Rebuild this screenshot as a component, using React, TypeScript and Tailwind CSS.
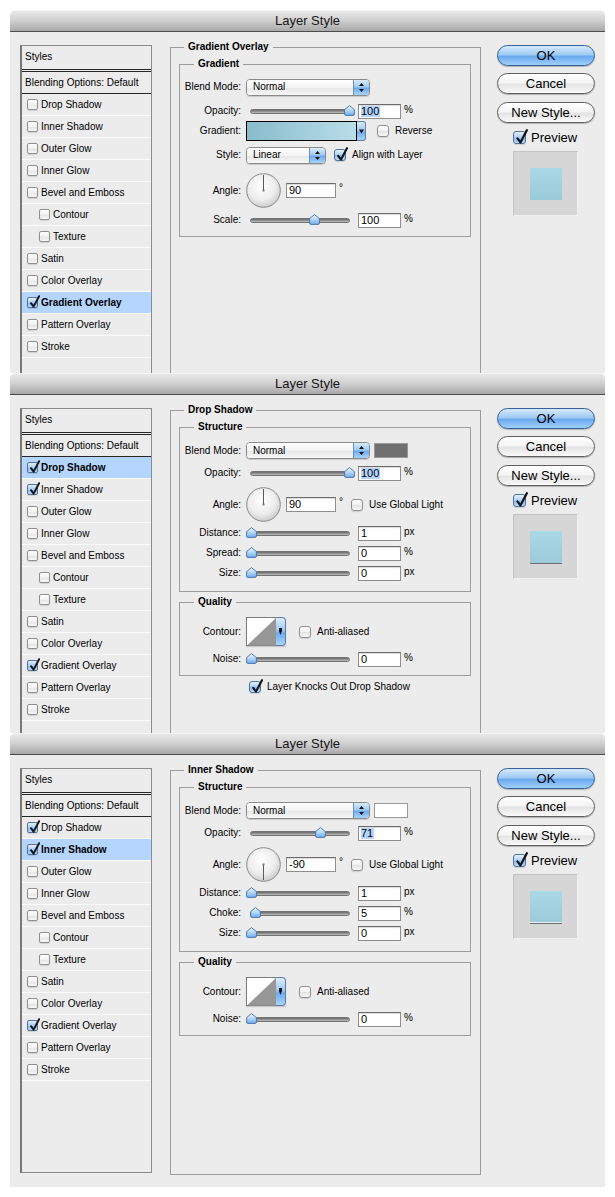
import React from "react";

const BLUE =
  "bg-[linear-gradient(to_bottom,#dcecfc_0%,#9fcaf4_45%,#6eaaf0_55%,#a8d4fb_100%)]";

type CBProps = { checked?: boolean; size?: 11 | 12 | 13; className?: string };

function CheckBox({ checked, size = 12, className }: CBProps) {
  const box =
    size === 11
      ? "w-[11px] h-[11px] rounded-[2px]"
      : size === 13
      ? "w-[13px] h-[13px] rounded-[3px]"
      : "w-[12px] h-[12px] rounded-[3px]";
  const skin = checked
    ? "border border-[#52729c] bg-[linear-gradient(to_bottom,#e6f1fc_0%,#a9cdf3_50%,#86b8ee_51%,#b8dafd_100%)]"
    : "border border-[#8f8f8f] bg-[linear-gradient(to_bottom,#ffffff_0%,#f0f0f0_50%,#e3e3e3_51%,#f7f7f7_100%)]";
  return (
    <span
      className={`relative inline-block shrink-0 ${box} ${skin} shadow-[0_1px_1px_rgba(0,0,0,0.12)] ${className ?? ""}`}
    >
      {checked && (
        <svg
          className="absolute left-[1px] top-[-3px]"
          width={size}
          height={size + 3}
          viewBox="0 0 12 15"
        >
          <path
            d="M2.2 8.8 L5 12.6 L11 1.2"
            fill="none"
            stroke="#141414"
            strokeWidth="2.1"
            strokeLinecap="round"
            strokeLinejoin="round"
          />
        </svg>
      )}
    </span>
  );
}

type Item = { name: string; indent?: boolean };
const ITEMS: Item[] = [
  { name: "Drop Shadow" },
  { name: "Inner Shadow" },
  { name: "Outer Glow" },
  { name: "Inner Glow" },
  { name: "Bevel and Emboss" },
  { name: "Contour", indent: true },
  { name: "Texture", indent: true },
  { name: "Satin" },
  { name: "Color Overlay" },
  { name: "Gradient Overlay" },
  { name: "Pattern Overlay" },
  { name: "Stroke" },
];

function StylesList({ selected, checked }: { selected: string; checked: string[] }) {
  return (
    <div className="mt-[5px] w-[132px] h-[405px] shrink-0 border border-[#8b8b8b] border-l-2 border-l-[#777777] bg-[#ececec] leading-none">
      <div className="h-[26px] flex items-center pl-[3px] pb-[1px] border-b-[3px] border-double border-b-[#262626]">
        Styles
      </div>
      <div className="h-[22px] flex items-center pl-[3px] border-b border-b-[#262626]">
        Blending Options: Default
      </div>
      {ITEMS.map((it) => {
        const sel = it.name === selected;
        return (
          <div
            key={it.name}
            className={`h-[22px] flex items-center border-b border-b-[#fafafa] ${
              it.indent ? "pl-[17px]" : "pl-[5px]"
            } ${sel ? "bg-[#b4d5fd] font-bold" : ""}`}
          >
            <CheckBox size={11} checked={checked.includes(it.name)} />
            <span className="ml-[3px]">{it.name}</span>
          </div>
        );
      })}
    </div>
  );
}

function Outer({ title, children }: { title: string; children?: React.ReactNode }) {
  return (
    <fieldset className="ml-[18px] w-[311px] h-[412px] shrink-0 min-w-0 border border-[#9c9c9c]">
      <legend className="ml-[13px] px-[4px] font-bold leading-[14px]">{title}</legend>
      {children}
    </fieldset>
  );
}

function Group({
  title,
  className,
  children,
}: {
  title: string;
  className?: string;
  children?: React.ReactNode;
}) {
  return (
    <fieldset className={`ml-[8px] w-[292px] min-w-0 border border-[#9c9c9c] ${className ?? ""}`}>
      <legend className="ml-[14px] px-[4px] font-bold leading-[14px]">{title}</legend>
      {children}
    </fieldset>
  );
}

function Row({
  label,
  cls,
  children,
}: {
  label: string;
  cls: string;
  children?: React.ReactNode;
}) {
  return (
    <div className={`flex items-center ${cls}`}>
      <div className="w-[61px] shrink-0 text-right leading-none">{label}</div>
      <div className="ml-[5px] flex items-center">{children}</div>
    </div>
  );
}

function Select({ w, text }: { w: string; text: string }) {
  return (
    <div
      className={`${w} h-[17px] shrink-0 flex rounded-[4px] border border-[#8a8a8a] overflow-hidden shadow-[0_1px_1px_rgba(0,0,0,0.15)]`}
    >
      <div className="flex-1 flex items-center pl-[6px] leading-none bg-[linear-gradient(to_bottom,#ffffff_0%,#f3f3f3_50%,#e6e6e6_51%,#f7f7f7_100%)]">
        {text}
      </div>
      <div className={`w-[16px] border-l border-l-[#6f8fb8] ${BLUE} flex items-center justify-center`}>
        <svg width="7" height="11" viewBox="0 0 7 11">
          <path d="M3.5 1 L6 4 H1 Z M3.5 10 L6 7 H1 Z" fill="#111" />
        </svg>
      </div>
    </div>
  );
}

function Slider({ v }: { v: number }) {
  return (
    <div className="relative w-[104px] h-[16px] shrink-0 flex items-center">
      <div className="ml-[4px] w-[100px] h-[5px] rounded-full border border-[#737373] bg-[linear-gradient(to_bottom,#6a6a6a,#999999_60%,#c2c2c2)]" />
      <svg
        className="absolute top-[2px]"
        style={{ left: -0.5 + v * 98.5 }}
        width="11"
        height="11"
        viewBox="0 0 11 11"
      >
        <defs>
          <linearGradient id="thumbg" x1="0" y1="0" x2="0" y2="1">
            <stop offset="0" stopColor="#eef6ff" />
            <stop offset="0.5" stopColor="#b4d6f8" />
            <stop offset="1" stopColor="#72abe9" />
          </linearGradient>
        </defs>
        <path
          d="M5.5 0.6 L10.4 4.6 V9 Q10.4 10.4 9 10.4 H2 Q0.6 10.4 0.6 9 V4.6 Z"
          fill="url(#thumbg)"
          stroke="#3f6fa6"
          strokeWidth="0.9"
        />
      </svg>
    </div>
  );
}

function Num({
  value,
  sel,
  cls,
}: {
  value: string;
  sel?: boolean;
  cls: string;
}) {
  return (
    <div
      className={`${cls} h-[15px] shrink-0 bg-white border border-[#8d8d8d] border-t-[#6c6c6c] shadow-[inset_0_1px_1px_rgba(0,0,0,0.15)] flex items-center pl-[2px] text-[11px] leading-none`}
    >
      {sel ? <span className="bg-[#b5d5ff] pr-[1px]">{value}</span> : value}
    </div>
  );
}

function Unit({ children }: { children: React.ReactNode }) {
  return <span className="ml-[3px] mb-[2px] leading-none">{children}</span>;
}

function SliderRow({
  label,
  cls,
  v,
  value,
  unit,
  sel,
}: {
  label: string;
  cls: string;
  v: number;
  value: string;
  unit: string;
  sel?: boolean;
}) {
  return (
    <Row label={label} cls={cls}>
      <Slider v={v} />
      <Num value={value} sel={sel} cls="ml-[8px] w-[43px]" />
      <Unit>{unit}</Unit>
    </Row>
  );
}

function Dial({ down }: { down?: boolean }) {
  return (
    <svg width="35" height="35" viewBox="0 0 35 35" className="shrink-0 block">
      <defs>
        <radialGradient id="dialg" cx="0.45" cy="0.38" r="0.62">
          <stop offset="0" stopColor="#ffffff" />
          <stop offset="0.65" stopColor="#ededed" />
          <stop offset="1" stopColor="#cdcdcd" />
        </radialGradient>
      </defs>
      <circle cx="17.5" cy="17.5" r="16.8" fill="url(#dialg)" stroke="#8a8a8a" strokeWidth="1" />
      <line x1="17.5" y1="17.5" x2="17.5" y2={down ? 33 : 2} stroke="#5a5a5a" strokeWidth="1" />
      <rect x="16.5" y="16.5" width="2" height="2" fill="#777777" />
    </svg>
  );
}

function AngleRow({ cls, value, down, globalLight }: { cls: string; value: string; down?: boolean; globalLight?: boolean }) {
  return (
    <Row label="Angle:" cls={cls}>
      <Dial down={down} />
      <Num value={value} cls="ml-[5px] w-[50px]" />
      <span className="ml-[3px] mb-[5px] leading-none">°</span>
      {globalLight && (
        <>
          <CheckBox className="ml-[8px]" />
          <span className="ml-[6px] leading-none">Use Global Light</span>
        </>
      )}
    </Row>
  );
}

function Contour() {
  return (
    <div className="flex h-[29px] shrink-0 shadow-[0_1px_1px_rgba(0,0,0,0.15)]">
      <svg width="30" height="29" viewBox="0 0 30 29" className="block">
        <rect x="0.5" y="0.5" width="29.5" height="28" fill="#ffffff" stroke="#7d7d7d" />
        <path d="M1 28.5 L30 1 L30 28.5 Z" fill="#979797" />
      </svg>
      <div
        className={`w-[10px] h-[29px] rounded-r-[4px] border border-l-0 border-[#5d7fab] ${BLUE} flex items-center justify-center`}
      >
        <svg width="5" height="8" viewBox="0 0 5 8">
          <path d="M1 0 H4 V3 L2.5 7 L1 3 Z" fill="#111" />
        </svg>
      </div>
    </div>
  );
}

function Quality() {
  return (
    <Group title="Quality" className="mt-[3px]">
      <div className="pb-[8px]">
        <Row label="Contour:" cls="mt-[8px] h-[29px]">
          <Contour />
          <CheckBox className="ml-[13px]" />
          <span className="ml-[6px] leading-none">Anti-aliased</span>
        </Row>
        <SliderRow label="Noise:" cls="mt-[5px] h-[16px]" v={0} value="0" unit="%" />
      </div>
    </Group>
  );
}

function Btn({
  primary,
  children,
  className,
}: {
  primary?: boolean;
  children: React.ReactNode;
  className?: string;
}) {
  return (
    <div
      className={`h-[21px] rounded-full border flex items-center justify-center text-[13px] leading-none shadow-[0_1px_1px_rgba(0,0,0,0.25)] ${
        primary
          ? "border-[#35609a] bg-[linear-gradient(to_bottom,#d5e9fd_0%,#a0cbf5_45%,#6ba9ee_55%,#9fd0fd_100%)]"
          : "border-[#5f5f5f] bg-[linear-gradient(to_bottom,#ffffff_0%,#f4f4f4_45%,#e4e4e4_55%,#fafafa_100%)]"
      } ${className ?? ""}`}
    >
      {children}
    </div>
  );
}

function Buttons({ square }: { square: string }) {
  return (
    <div className="ml-[16px] mt-[5px] w-[98px] shrink-0 flex flex-col">
      <Btn primary>OK</Btn>
      <Btn className="mt-[7px]">Cancel</Btn>
      <Btn className="mt-[8px]">New Style...</Btn>
      <div className="mt-[7px] ml-[16px] h-[14px] flex items-center">
        <CheckBox checked size={13} />
        <span className="ml-[5px] text-[13px] leading-none">Preview</span>
      </div>
      <div className="mt-[7px] ml-[16px] w-[65px] h-[65px] bg-[#d6d6d6] border border-t-[#c2c2c2] border-l-[#c2c2c2] border-r-[#f0f0f0] border-b-[#f0f0f0] flex items-center justify-center">
        <div className={`w-[32px] h-[32px] bg-[linear-gradient(to_bottom,#acd8e6,#9bcad9)] ${square}`} />
      </div>
    </div>
  );
}

function Dialog({
  bodyH,
  list,
  middle,
  square,
}: {
  bodyH: string;
  list: React.ReactNode;
  middle: React.ReactNode;
  square: string;
}) {
  return (
    <div className="w-[595px]">
      <div className="h-[22px] rounded-t-[5px] border-b border-b-[#4c4c4c] bg-[linear-gradient(to_bottom,#ebebeb,#d0d0d0_50%,#a8a8a8)] shadow-[inset_0_1px_0_#f6f6f6] flex items-center justify-center text-[13px] text-[#151515] leading-none">
        Layer Style
      </div>
      <div className={`${bodyH} bg-[#ececec] overflow-hidden flex items-start pl-[10px] pt-[8px]`}>
        {list}
        {middle}
        <Buttons square={square} />
      </div>
    </div>
  );
}

export default function App() {
  return (
    <div className="w-[615px] h-[1197px] bg-white pt-[10px] pl-[10px] font-['Liberation_Sans',Arial,Helvetica,sans-serif] text-[10px] text-black">
      <Dialog
        bodyH="h-[341px]"
        square=""
        list={<StylesList selected="Gradient Overlay" checked={["Gradient Overlay"]} />}
        middle={
          <Outer title="Gradient Overlay">
            <Group title="Gradient" className="mt-[3px]">
              <div className="pb-[8px]">
                <Row label="Blend Mode:" cls="mt-[8px] h-[16px]">
                  <Select w="w-[124px]" text="Normal" />
                </Row>
                <SliderRow label="Opacity:" cls="mt-[8px] h-[16px]" v={1} value="100" unit="%" sel />
                <Row label="Gradient:" cls="mt-[2px] h-[20px]">
                  <div className="flex h-[20px] shrink-0">
                    <div className="w-[111px] h-[20px] border border-black bg-[linear-gradient(to_right,#88bccc,#b9dde9)]" />
                    <div
                      className={`w-[9px] h-[20px] rounded-r-[3px] border border-l-0 border-[#5d7fab] ${BLUE} flex items-center justify-center`}
                    >
                      <svg width="5" height="5" viewBox="0 0 5 5">
                        <path d="M0 0.5 H5 L2.5 4.5 Z" fill="#111" />
                      </svg>
                    </div>
                  </div>
                  <CheckBox className="ml-[11px]" />
                  <span className="ml-[6px] leading-none">Reverse</span>
                </Row>
                <Row label="Style:" cls="mt-[6px] h-[16px]">
                  <Select w="w-[80px]" text="Linear" />
                  <CheckBox checked className="ml-[8px]" />
                  <span className="ml-[6px] leading-none">Align with Layer</span>
                </Row>
                <AngleRow cls="mt-[10px] h-[35px]" value="90" />
                <SliderRow label="Scale:" cls="mt-[4px] h-[16px]" v={0.64} value="100" unit="%" />
              </div>
            </Group>
          </Outer>
        }
      />
      <Dialog
        bodyH="h-[338px]"
        square="shadow-[0_1px_0_#6f6f6f]"
        list={
          <StylesList
            selected="Drop Shadow"
            checked={["Drop Shadow", "Inner Shadow", "Gradient Overlay"]}
          />
        }
        middle={
          <Outer title="Drop Shadow">
            <Group title="Structure" className="mt-[3px]">
              <div className="pb-[10px]">
                <Row label="Blend Mode:" cls="mt-[8px] h-[17px]">
                  <Select w="w-[124px]" text="Normal" />
                  <div className="ml-[4px] w-[34px] h-[15px] border border-[#9a9a9a] bg-[#6f6f6f]" />
                </Row>
                <SliderRow label="Opacity:" cls="mt-[6px] h-[16px]" v={1} value="100" unit="%" sel />
                <AngleRow cls="mt-[6px] h-[35px]" value="90" globalLight />
                <SliderRow label="Distance:" cls="mt-[3px] h-[16px]" v={0} value="1" unit="px" />
                <SliderRow label="Spread:" cls="mt-[4px] h-[16px]" v={0} value="0" unit="%" />
                <SliderRow label="Size:" cls="mt-[4px] h-[16px]" v={0} value="0" unit="px" />
              </div>
            </Group>
            <Quality />
            <div className="mt-[4px] h-[14px] flex items-center pl-[78px]">
              <CheckBox checked />
              <span className="ml-[6px] leading-none">Layer Knocks Out Drop Shadow</span>
            </div>
          </Outer>
        }
      />
      <Dialog
        bodyH="h-[432px]"
        square="shadow-[inset_0_-1px_0_rgba(255,255,255,0.75),0_1px_0_#6f6f6f]"
        list={
          <StylesList
            selected="Inner Shadow"
            checked={["Drop Shadow", "Inner Shadow", "Gradient Overlay"]}
          />
        }
        middle={
          <Outer title="Inner Shadow">
            <Group title="Structure" className="mt-[3px]">
              <div className="pb-[10px]">
                <Row label="Blend Mode:" cls="mt-[8px] h-[17px]">
                  <Select w="w-[124px]" text="Normal" />
                  <div className="ml-[4px] w-[34px] h-[15px] border border-[#9a9a9a] bg-white" />
                </Row>
                <SliderRow label="Opacity:" cls="mt-[6px] h-[16px]" v={0.71} value="71" unit="%" sel />
                <AngleRow cls="mt-[6px] h-[35px]" value="-90" down globalLight />
                <SliderRow label="Distance:" cls="mt-[3px] h-[16px]" v={0} value="1" unit="px" />
                <SliderRow label="Choke:" cls="mt-[4px] h-[16px]" v={0.05} value="5" unit="%" />
                <SliderRow label="Size:" cls="mt-[4px] h-[16px]" v={0} value="0" unit="px" />
              </div>
            </Group>
            <Quality />
          </Outer>
        }
      />
    </div>
  );
}
